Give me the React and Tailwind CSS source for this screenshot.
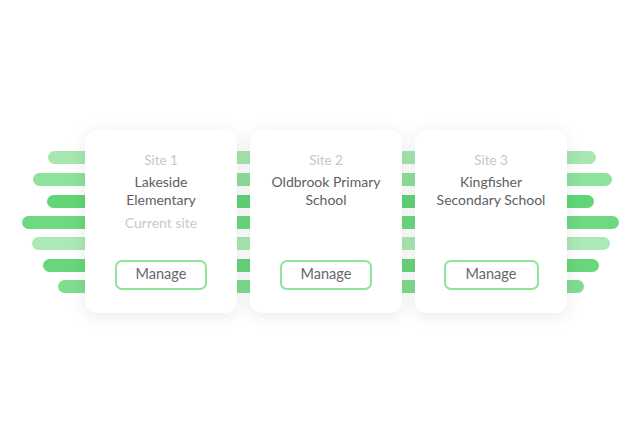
import React from "react";

const bars = [
  { cls: "mt-[21px] ml-[48px] w-[548px] bg-[#a6e8b0]" },
  { cls: "mt-[9px] ml-[33px] w-[579px] bg-[#8ee29c]" },
  { cls: "mt-[9px] ml-[47px] w-[547px] bg-[#62d677]" },
  { cls: "mt-[8px] ml-[22px] w-[597px] bg-[#6dd981]" },
  { cls: "mt-[8px] ml-[32px] w-[578px] bg-[#ade9b6]" },
  { cls: "mt-[9px] ml-[43px] w-[556px] bg-[#68d77b]" },
  { cls: "mt-[8px] ml-[58px] w-[526px] bg-[#80dd90]" },
];

const sites = [
  { label: "Site 1", name: ["Lakeside", "Elementary"], current: true, btn: "w-[92px]" },
  { label: "Site 2", name: ["Oldbrook Primary", "School"], btn: "w-[92px]" },
  { label: "Site 3", name: ["Kingfisher", "Secondary School"], btn: "w-[95px]" },
];

function Card({ site }) {
  return (
    <div className="flex flex-col items-center w-[152px] h-[183px] bg-white rounded-[12px] shadow-[0_3px_18px_rgba(0,0,0,0.09)] pt-[21px] pb-[23px]">
      <div className="text-[13.5px] leading-[18px] text-[#c6c6c8]">{site.label}</div>
      <div className="mt-[4px] text-[14px] leading-[18px] text-[#5e5e66] text-center">
        {site.name.map((n) => (
          <div key={n}>{n}</div>
        ))}
      </div>
      {site.current && (
        <div className="mt-[5px] text-[14px] leading-[18px] text-[#c9c9cb]">Current site</div>
      )}
      <button
        className={
          "mt-auto h-[30px] pb-[3px] rounded-[7px] border-2 border-[#8ce598] bg-white text-[14.5px] text-[#66666e] flex items-center justify-center " +
          site.btn
        }
      >
        Manage
      </button>
    </div>
  );
}

export default function App() {
  return (
    <div
      className="w-[640px] h-[441px] bg-white overflow-hidden pt-[130px]"
      style={{ fontFamily: "Lato, 'Open Sans', sans-serif" }}
    >
      <div className="grid">
        <div className="col-start-1 row-start-1 flex flex-col">
          {bars.map((b, i) => (
            <div key={i} className={"h-[13px] rounded-full " + b.cls} />
          ))}
        </div>
        <div className="col-start-1 row-start-1 flex pl-[85px] gap-[13px] items-start">
          {sites.map((s) => (
            <Card key={s.label} site={s} />
          ))}
        </div>
      </div>
    </div>
  );
}
